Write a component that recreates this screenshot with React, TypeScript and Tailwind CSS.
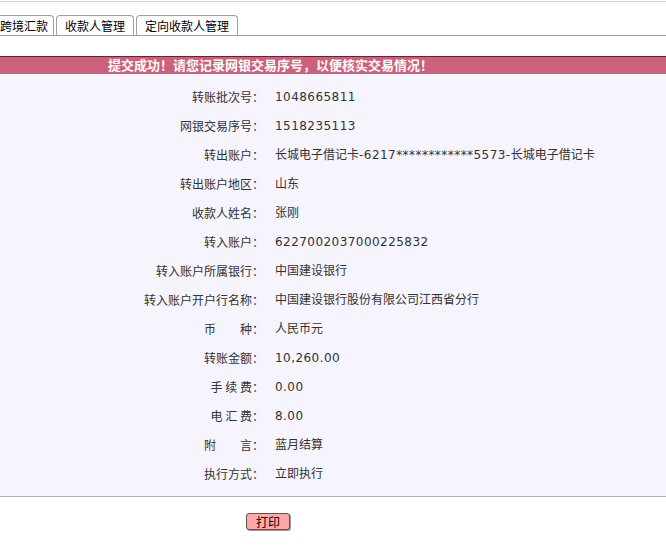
import React from "react";

const rows: [string, string][] = [
  ["转账批次号：", "1048665811"],
  ["网银交易序号：", "1518235113"],
  ["转出账户：", "长城电子借记卡-6217************5573-长城电子借记卡"],
  ["转出账户地区：", "山东"],
  ["收款人姓名：", "张刚"],
  ["转入账户：", "6227002037000225832"],
  ["转入账户所属银行：", "中国建设银行"],
  ["转入账户开户行名称：", "中国建设银行股份有限公司江西省分行"],
  ["币\u3000\u3000种：", "人民币元"],
  ["转账金额：", "10,260.00"],
  ["手 续 费：", "0.00"],
  ["电 汇 费：", "8.00"],
  ["附\u3000\u3000言：", "蓝月结算"],
  ["执行方式：", "立即执行"],
];

const cjk = "font-['DejaVu_Sans','Noto_Sans_CJK_SC',sans-serif]";

function Value({ v }: { v: string }) {
  const parts = v.split(/([\x20-\x7e]+)/).filter((p) => p.length > 0);
  return (
    <>
      {parts.map((p, i) =>
        /^[\x20-\x7e]+$/.test(p) ? (
          <span key={i} className="tracking-[0.45px]">
            {p}
          </span>
        ) : (
          <span key={i}>{p}</span>
        )
      )}
    </>
  );
}

export default function App() {
  const tabs = ["跨境汇款", "收款人管理", "定向收款人管理"];
  return (
    <div className={`w-[666px] h-[550px] bg-white overflow-hidden text-[12px] ${cjk}`}>
      <div className="h-px mt-px bg-[#d0d0d0]" />
      <div className="flex items-end gap-[2px] mt-[14px] -ml-[9px] h-[20px] border-b border-[#a0a0a0]">
        {tabs.map((t, i) => (
          <div
            key={t}
            className={`h-[20px] pl-[8px] ${i === 0 ? "pr-[5px]" : "pr-[8px]"} border border-b-0 border-[#a0a0a0] rounded-t-[4px] bg-white text-black leading-[20px] font-['Noto_Sans_CJK_SC',sans-serif]`}
          >
            {t}
          </div>
        ))}
      </div>
      <div className="mt-[20px] h-[18px] bg-[#cc617c] border-t border-[#7a1a2c] text-white text-[13px] font-bold leading-[16px] pl-[108px] font-['Noto_Sans_CJK_SC',sans-serif]">
        提交成功！请您记录网银交易序号，以便核实交易情况！
      </div>
      <div className="bg-[#f6f4fd] pt-[8px] pb-[8px] border-b border-[#b0b0b8]">
        {rows.map(([k, v]) => (
          <div key={k} className="flex h-[29px] items-center text-[#333]">
            <div className="w-[265px] text-right pr-[1px] whitespace-pre font-['Noto_Sans_CJK_SC',sans-serif]">{k}</div>
            <div className="pl-[10px] whitespace-nowrap">
              <Value v={v} />
            </div>
          </div>
        ))}
      </div>
      <div className="mt-[16px] pl-[246px]">
        <button className="w-[44px] h-[17px] bg-[#ffa8a8] border border-[#555] rounded-[3px] text-black text-[12px] leading-[15px] font-['Noto_Sans_CJK_SC',sans-serif] shadow-[1px_1px_0_#999]">
          打印
        </button>
      </div>
    </div>
  );
}
